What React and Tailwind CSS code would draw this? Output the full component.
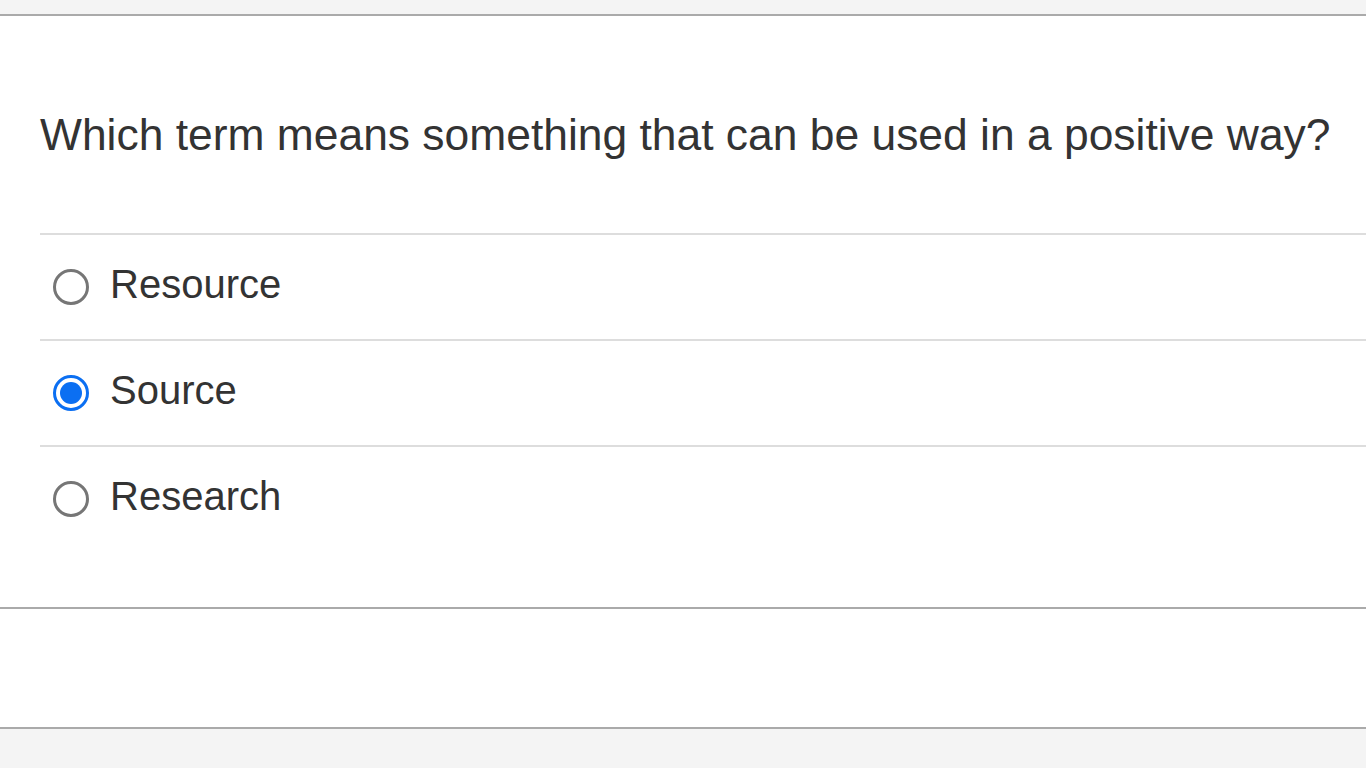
const OPTIONS = [
  { id: 'resource', label: 'Resource' },
  { id: 'source', label: 'Source' },
  { id: 'research', label: 'Research' }
];

function Radio({ checked }) {
  if (checked) {
    return (
      <span className="w-[36px] h-[36px] rounded-full border-[3px] border-[#0b6ff2] flex items-center justify-center shrink-0">
        <span className="w-[22px] h-[22px] rounded-full bg-[#0b6ff2]" />
      </span>
    );
  }
  return <span className="w-[36px] h-[36px] rounded-full border-[3px] border-[#767676] shrink-0" />;
}

export default function App() {
  const selected = 'source';

  return (
    <div className="min-h-screen bg-[#f4f4f4] text-[#333] font-['Liberation_Sans',Arial,sans-serif]">
      <div className="h-[14px]" />
      <main className="bg-white border-t-2 border-[#aaa] pl-10 pt-[94px] pb-[56px]">
        <h1 className="text-[44.4px] leading-[50px] whitespace-nowrap">
          Which term means something that can be used in a positive way?
        </h1>
        <ul className="mt-[73px]">
          {OPTIONS.map((o) => (
            <li
              key={o.id}
              className="h-[106px] flex items-center gap-[21px] pl-[13px] border-t-2 border-[#ddd]"
            >
              <Radio checked={o.id === selected} />
              <span className="text-[40px] leading-[46px] pb-[6px]">{o.label}</span>
            </li>
          ))}
        </ul>
      </main>
      <div className="h-[122px] bg-white border-y-2 border-[#aaa]" />
    </div>
  );
}
